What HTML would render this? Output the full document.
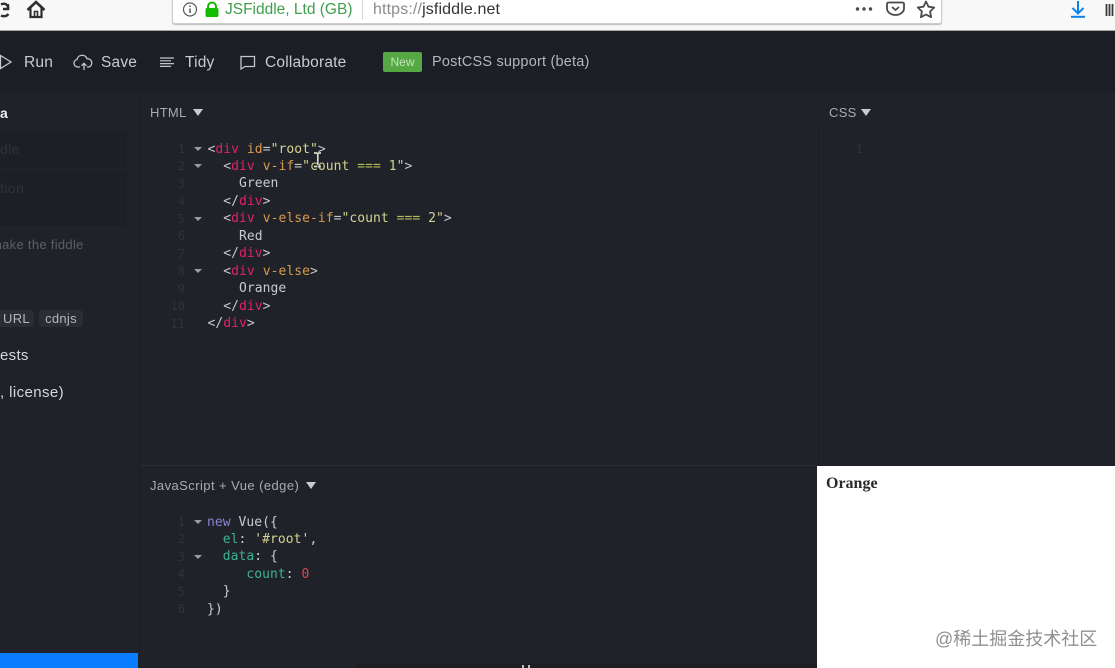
<!DOCTYPE html>
<html><head><meta charset="utf-8">
<style>
html,body{margin:0;padding:0}
body{width:1115px;height:668px;overflow:hidden;position:relative;background:#1f2228;font-family:"Liberation Sans",sans-serif}
#w{position:absolute;left:0;top:0;width:1115px;height:668px;overflow:hidden;filter:blur(.35px)}
.a{position:absolute;white-space:pre}
.bar{position:absolute;left:0;top:0;width:1115px;height:31px;background:#f8f8f8;border-bottom:1px solid #a9a9a9;box-sizing:border-box}
.url{position:absolute;left:172px;top:-4px;width:770px;height:28px;background:#fff;border:1px solid #ccc;border-radius:3px;box-sizing:border-box;box-shadow:0 1px 1px #bbb}
.top{position:absolute;left:0;top:31px;width:1115px;height:61px;background:#1c1e25}
.side{position:absolute;left:0;top:92px;width:139px;height:576px;background:#1f2228}
.tb{color:#c9cbcf;font-size:15.500px;letter-spacing:.2px;top:54px;line-height:18px}
.lab{color:#a9abb0;font-size:13px;letter-spacing:.3px;line-height:16px}
.code{position:absolute;font:13px/17.45px "DejaVu Sans Mono","Liberation Mono",monospace;color:#c9cbcd;white-space:pre;letter-spacing:.05px}
.ln{position:absolute;font:12px/17.45px "DejaVu Sans Mono",monospace;color:#2f3238;text-align:right;width:30px;white-space:pre}
.p{color:#e0216b}.t{color:#c8c8c8}.o{color:#d99a4e}.s{color:#d5d290}.g{color:#3fb28f}.v{color:#8f7fd6}.r{color:#e0454f}.y{color:#b6bd5a}
.fold{position:absolute;width:0;height:0;border-left:4px solid transparent;border-right:4px solid transparent;border-top:4px solid #9a9da2;left:194px}
.tri{position:absolute;width:0;height:0;border-left:5px solid transparent;border-right:5px solid transparent;border-top:7px solid #c9cbcf}
.tag{position:absolute;top:310px;height:17px;background:#2a2d33;border-radius:4px;color:#b4b6ba;font-size:13px;line-height:17px;text-align:center;letter-spacing:.3px}
</style></head>
<body>
<div id="w">
<div class="bar"></div>
<svg class="a" style="left:0;top:0" width="50" height="24" viewBox="0 0 50 24" fill="none" stroke="#2e2e30" stroke-width="2.400"><path d="M1 4.500C6 2 9 6 8 10M8 4v5H3M1 15.500C4 17 7 16 8.500 14"/><path d="M27.500 10 36 2l8.500 8" stroke-width="2.600"/><path d="M30.500 8.500V17h11V8.500" stroke-width="2.200"/><path d="M34.500 17v-5.500h3V17" stroke-width="1.600"/></svg>
<div class="url"></div>
<svg class="a" style="left:182px;top:1px" width="40" height="18" viewBox="0 0 40 18" fill="none"><circle cx="8" cy="8.500" r="6.500" stroke="#5a5a5c" stroke-width="1.200"/><path d="M8 7.500v4.500M8 4.500v1.500" stroke="#5a5a5c" stroke-width="1.500"/><rect x="23.500" y="7" width="13" height="9" rx="1.500" fill="#12bc00"/><path d="M26 8V5.500a4 4 0 0 1 8 0V8" stroke="#12bc00" stroke-width="2"/></svg>
<div class="a" style="left:225px;top:1px;color:#3f9f4d;font-size:15.500px;line-height:18px">JSFiddle, Ltd (GB)</div>
<div class="a" style="left:362px;top:0;width:1px;height:20px;background:#d5d5d5"></div>
<div class="a" style="left:373px;top:1px;font-size:16px;line-height:18px;color:#8b8b8d;letter-spacing:.13px">https://<span style="color:#333335">jsfiddle.net</span></div>
<svg class="a" style="left:850px;top:0" width="90" height="20" viewBox="0 0 90 20" fill="none" stroke="#4a4a4d"><circle cx="7.500" cy="9" r="1.700" fill="#4a4a4d" stroke="none"/><circle cx="14" cy="9" r="1.700" fill="#4a4a4d" stroke="none"/><circle cx="20.500" cy="9" r="1.700" fill="#4a4a4d" stroke="none"/><path d="M38.500 2.500h14a1.500 1.500 0 0 1 1.500 1.500v4.500a8.500 6.500 0 0 1-17 0V4a1.500 1.500 0 0 1 1.500-1.500z" stroke-width="1.800"/><path d="M42 7l3.500 3L49 7" stroke-width="1.800"/><path d="M76 1.500l2.500 5.200 5.700.8-4.100 4 1 5.700-5.100-2.700-5.100 2.700 1-5.700-4.100-4 5.700-.8z" stroke-width="1.800" stroke-linejoin="round"/></svg>
<svg class="a" style="left:1068px;top:0" width="47" height="20" viewBox="0 0 47 20" fill="none"><path d="M10 1v12M4.500 8l5.500 5.500L15.500 8" stroke="#0a84e8" stroke-width="2"/><path d="M3 16.800h14" stroke="#0a84e8" stroke-width="2"/><path d="M38.500 4v12M41.500 4v12M44.500 4v12" stroke="#3a3a3c" stroke-width="1.800"/></svg>

<div class="top"></div>
<div class="side"></div>
<div class="a" style="left:139px;top:92px;width:1px;height:576px;background:#1b1d22"></div>

<svg class="a" style="left:0;top:53px" width="260" height="20" viewBox="0 0 260 20" fill="none" stroke="#c4c6ca" stroke-width="1.300"><path d="M.5 2.500l10.500 6.500-10.500 6.500z" /><path d="M80 14h-2.500a3.800 3.800 0 0 1-.5-7.500 5.200 5.200 0 0 1 10-.8 4.300 4.300 0 0 1 2 8.300h-2M84 17v-6.500M81.500 12.800l2.500-2.500 2.500 2.500"/><path d="M160 5h14M160 7.800h11M160 10.600h14M160 13.400h11" stroke-width="1.200"/><path d="M241 3.500h13.500v10H245l-4 2.500z"/></svg>
<div class="a tb" style="left:24px">Run</div>
<div class="a tb" style="left:101px">Save</div>
<div class="a tb" style="left:185px">Tidy</div>
<div class="a tb" style="left:265px">Collaborate</div>
<div class="a" style="left:383px;top:52px;width:39px;height:20px;background:#55a844;border-radius:2px;color:#c4e6b9;font-size:12px;line-height:20px;text-align:center">New</div>
<div class="a" style="left:432px;top:54px;color:#b4b6ba;font-size:14.500px;line-height:17px;letter-spacing:.2px">PostCSS support (beta)</div>

<div class="a" style="left:0;top:105px;color:#f0f0f0;font-size:14px;font-weight:bold;line-height:16px">a</div>
<div class="a" style="left:0;top:132px;width:127px;height:36px;background:#1d1f26"></div>
<div class="a" style="left:0;top:172px;width:127px;height:54px;background:#1d1f26"></div>
<div class="a" style="left:0;top:141px;color:#30323a;font-size:14px;line-height:16px;letter-spacing:.4px">dle</div>
<div class="a" style="left:0;top:180px;color:#30323a;font-size:14px;line-height:16px;letter-spacing:.4px">tion</div>
<div class="a" style="left:-9px;top:237px;color:#5d5f65;font-size:13px;line-height:16px;letter-spacing:.3px">make the fiddle</div>
<div class="tag" style="left:-4px;width:38px"></div>
<div class="a" style="left:3px;top:310px;color:#b4b6ba;font-size:13px;line-height:17px;letter-spacing:.3px">URL</div>
<div class="tag" style="left:39px;width:44px">cdnjs</div>
<div class="a" style="left:0;top:347px;color:#d6d7da;font-size:15px;line-height:18px;letter-spacing:.3px">ests</div>
<div class="a" style="left:0;top:384px;color:#d6d7da;font-size:15px;line-height:18px;letter-spacing:.4px">, license)</div>
<div class="a" style="left:0;top:653px;width:138px;height:15px;background:#0a7cff"></div>

<div class="a lab" style="left:150px;top:105px">HTML</div><div class="tri" style="left:193px;top:109px"></div>
<div class="a lab" style="left:829px;top:105px">CSS</div><div class="tri" style="left:861px;top:109px"></div>
<div class="a lab" style="left:150px;top:478px;letter-spacing:.43px">JavaScript + Vue (edge)</div><div class="tri" style="left:306px;top:482px"></div>
<div class="a" style="left:140px;top:465px;width:677px;height:1px;background:#2a2d33"></div>
<div class="a" style="left:818px;top:128px;width:1px;height:337px;background:#1b1d22"></div>

<div class="ln" style="left:155px;top:141px">1
2
3
4
5
6
7
8
9
10
11</div>
<div class="fold" style="top:147px"></div><div class="fold" style="top:164px"></div><div class="fold" style="top:217px"></div><div class="fold" style="top:269px"></div>
<div class="code" style="left:207.500px;top:140.500px"><span class="t">&lt;</span><span class="p">div</span> <span class="o">id</span><span class="t">=</span><span class="s">"root"</span><span class="t">&gt;</span>
  <span class="t">&lt;</span><span class="p">div</span> <span class="o">v-if</span><span class="t">=</span><span class="s">"count <span class="y">===</span> 1"</span><span class="t">&gt;</span>
    Green
  <span class="t">&lt;/</span><span class="p">div</span><span class="t">&gt;</span>
  <span class="t">&lt;</span><span class="p">div</span> <span class="o">v-else-if</span><span class="t">=</span><span class="s">"count <span class="y">===</span> 2"</span><span class="t">&gt;</span>
    Red
  <span class="t">&lt;/</span><span class="p">div</span><span class="t">&gt;</span>
  <span class="t">&lt;</span><span class="p">div</span> <span class="o">v-else</span><span class="t">&gt;</span>
    Orange
  <span class="t">&lt;/</span><span class="p">div</span><span class="t">&gt;</span>
<span class="t">&lt;/</span><span class="p">div</span><span class="t">&gt;</span></div>
<svg class="a" style="left:312px;top:151px" width="12" height="18" viewBox="0 0 12 18" fill="none" stroke="#d8d8c8" stroke-width="1.700"><path d="M2 2h3.500M9 2H6M5.800 2v12M2 15.500h3.500M9 15.500H6"/></svg>

<div class="ln" style="left:833px;top:141px">1</div>

<div class="ln" style="left:155px;top:514px">1
2
3
4
5
6</div>
<div class="fold" style="top:520px"></div><div class="fold" style="top:555px"></div>
<div class="code" style="left:207px;top:513.500px"><span class="v">new</span> Vue({
  <span class="g">el</span>: <span class="s">'#root'</span>,
  <span class="g">data</span>: {
     <span class="g">count</span>: <span class="r">0</span>
  }
})</div>

<div class="a" style="left:817px;top:466px;width:298px;height:202px;background:#fff"></div>
<div class="a" style="left:826px;top:474px;color:#2a2a2a;font:bold 16px/19px 'Liberation Serif',serif">Orange</div>
<div class="a" style="left:935px;top:628px;color:#8f8f8f;font:18px/22px 'Liberation Sans','Noto Sans CJK SC',sans-serif">@稀土掘金技术社区</div>
<div class="a" style="left:355px;top:664px;width:462px;height:4px;background:#1c1e24"></div>
<div class="a" style="left:522px;top:665px;width:2px;height:3px;background:#bbb"></div>
<div class="a" style="left:528px;top:665px;width:2px;height:3px;background:#bbb"></div>
</div>
</body></html>
